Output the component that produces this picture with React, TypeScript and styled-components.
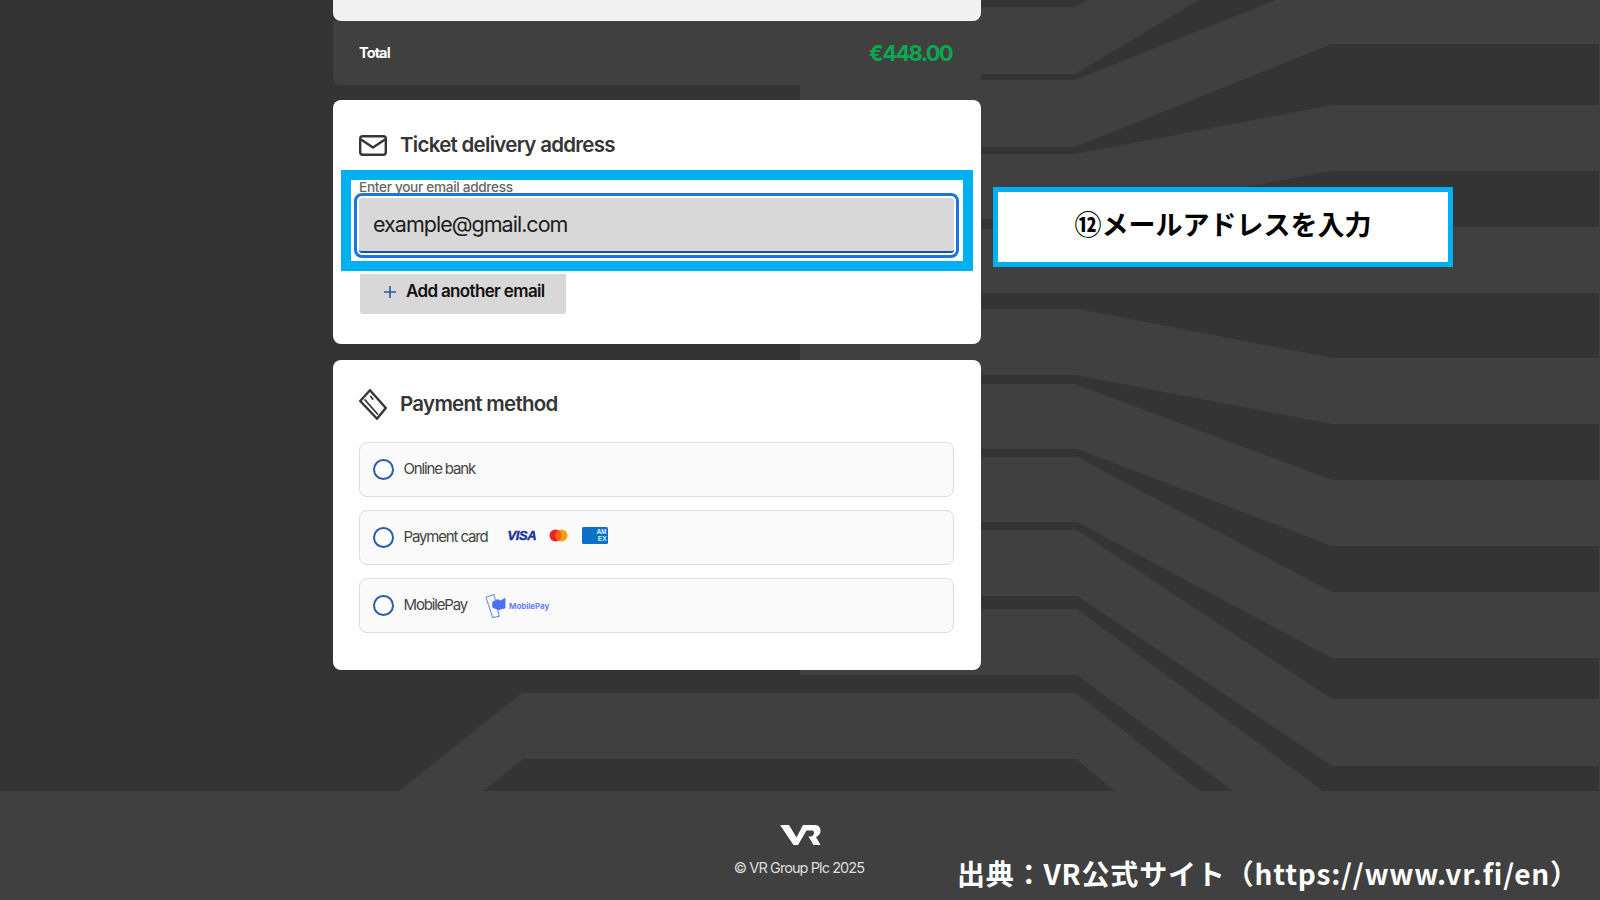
import React from "react";
import styled, { createGlobalStyle } from "styled-components";

const Global = createGlobalStyle`
  html, body { margin: 0; padding: 0; background: #404040; overflow: hidden; }
  body { font-family: Inter, "Liberation Sans", sans-serif; }
  * { box-sizing: border-box; }
`;

const Page = styled.div`
  width: 1600px;
  height: 900px;
  display: flex;
  flex-direction: column;
  position: relative;
  overflow: hidden;
`;
const Main = styled.main`
  position: relative;
  height: 791px;
  flex: none;
  background: #404040;
  overflow: hidden;
`;
const Pattern = styled.svg`
  position: absolute;
  inset: 0;
  width: 1600px;
  height: 791px;
`;
const Column = styled.div`
  position: relative;
  width: 648px;
  margin-left: 333px;
  display: flex;
  flex-direction: column;
`;
const SummaryEnd = styled.div`
  height: 21px;
  background: #f1f1f1;
  border-radius: 0 0 8px 8px;
`;
const TotalBar = styled.div`
  height: 64px;
  background: #404040;
  border-radius: 0 0 8px 8px;
  padding: 0 29px 2px 26px;
  display: flex;
  align-items: center;
  justify-content: space-between;
  margin-bottom: 15px;
`;
const TotalLabel = styled.span`
  color: #fff;
  font-size: 14.5px;
  font-weight: 700;
  letter-spacing: -0.9px;
`;
const TotalValue = styled.span`
  color: #0ca750;
  font-size: 22px;
  font-weight: 700;
  letter-spacing: -1.7px;
  margin-top: 2px;
`;
const Card = styled.section<{ $pt: number; $pb: number }>`
  background: #fff;
  border-radius: 8px;
  padding: ${(p) => p.$pt}px 27px ${(p) => p.$pb}px 26px;
  margin-bottom: 16px;
`;
const Heading = styled.h2`
  margin: 0;
  height: 30px;
  display: flex;
  align-items: center;
  gap: 13px;
  font-size: 20.5px;
  font-weight: 600;
  color: #353535;
  letter-spacing: -0.72px;
`;
const HeadingText = styled.span`
  margin-top: -2px;
`;
const FieldLabel = styled.label`
  display: block;
  margin-top: 18px;
  height: 20px;
  line-height: 18px;
  font-size: 13.6px;
  font-weight: 500;
  color: #666;
  letter-spacing: -0.3px;
`;
const EmailInput = styled.div`
  height: 55px;
  background: #d8d8d8;
  border-bottom: 2px solid #1c4fb5;
  border-radius: 3px;
  outline: 3px solid #1b74e4;
  outline-offset: 2px;
  padding: 0 14px 1px;
  display: flex;
  align-items: center;
  font-size: 21.5px;
  color: #1c1c1c;
  letter-spacing: -0.98px;
`;
const AddButton = styled.div`
  margin-top: 21px;
  margin-left: 1px;
  width: 206px;
  height: 40px;
  background: #d8d8d8;
  border-radius: 0 0 3px 3px;
  display: flex;
  align-items: center;
  gap: 9px;
  padding: 0 0 5px 23px;
  font-size: 17px;
  font-weight: 600;
  color: #111;
  letter-spacing: -0.65px;
`;
const AddLabel = styled.span`
  margin-top: -2px;
`;
const Options = styled.div`
  margin-top: 23px;
  display: flex;
  flex-direction: column;
  gap: 13px;
`;
const Option = styled.div`
  height: 55px;
  background: #fafafa;
  border: 1.5px solid #dddddd;
  border-radius: 8px;
  padding: 0 0 0 13px;
  display: flex;
  align-items: center;
`;
const Radio = styled.span`
  width: 21px;
  height: 21px;
  flex: none;
  border-radius: 50%;
  border: 2px solid #2a5bb0;
  background: #fff;
  margin-right: 9.5px;
`;
const OptionText = styled.span`
  font-size: 15px;
  color: #444;
  letter-spacing: -1.15px;
  margin-top: -2px;
`;
const CardLogos = styled.div`
  margin-left: 20px;
  display: flex;
  align-items: center;
  margin-top: -4px;
`;
const Visa = styled.span`
  font-family: "Liberation Sans", sans-serif;
  font-size: 13px;
  font-weight: 700;
  font-style: italic;
  color: #1a2fa3;
  letter-spacing: -0.4px;
  -webkit-text-stroke: 0.4px #1a2fa3;
  width: 41px;
`;
const Amex = styled.span`
  width: 26px;
  height: 17px;
  margin-left: 14px;
  background: #0a70c8;
  border-radius: 1.5px;
  color: #dcefff;
  font-family: "Liberation Sans", sans-serif;
  font-size: 6.5px;
  font-weight: 700;
  line-height: 7px;
  text-align: right;
  padding: 1px 1px 0 0;
`;
const MobilePayMark = styled.div`
  margin-left: 18px;
  display: flex;
  align-items: center;
  gap: 3px;
  margin-top: 1px;
`;
const MobilePayText = styled.span`
  font-size: 8px;
  font-weight: 700;
  color: #6a80f5;
  letter-spacing: -0.1px;
`;
const HighlightFrame = styled.div`
  position: absolute;
  left: 341px;
  top: 170px;
  width: 632px;
  height: 101px;
  border: 10px solid #00b0f0;
  pointer-events: none;
`;
const Callout = styled.div`
  position: absolute;
  left: 993px;
  top: 187px;
  width: 460px;
  height: 80px;
  background: #fff;
  border: 5px solid #00b0f0;
  padding-bottom: 8px;
  display: flex;
  align-items: center;
  justify-content: center;
  font-family: "Noto Sans CJK JP", sans-serif;
  font-size: 27px;
  font-weight: 700;
  color: #000;
`;
const Footer = styled.footer`
  flex: 1;
  background: #404040;
  display: flex;
  flex-direction: column;
  align-items: center;
  padding-top: 34px;
`;
const Copyright = styled.div`
  margin-top: 12px;
  margin-right: 2px;
  line-height: 22px;
  font-size: 14.5px;
  color: #dedede;
  letter-spacing: -0.92px;
`;
const Credit = styled.div`
  position: absolute;
  left: 957px;
  top: 852px;
  font-family: "Noto Sans CJK JP", sans-serif;
  font-size: 28px;
  line-height: 42px;
  font-weight: 700;
  color: #fff;
  white-space: nowrap;
  letter-spacing: 0.82px;
`;

const D = "#343434";
const bands = [
  "800,0 1087,0 1075,7 800,7",
  "800,74 1075,74 1199,0 1276,0 1075,80 800,80",
  "800,147 1075,147 1332,44 1599,44 1599,105 1332,105 1075,154 800,154",
  "800,219 1075,219 1332,171 1599,171 1599,227 1332,227 1075,229 800,229",
  "800,293 1599,293 1599,358 1332,358 1079,309 800,309",
  "800,375 1075,375 1332,424 1599,424 1599,480 1332,480 1075,384 800,384",
  "800,449 1077,449 1332,546 1599,546 1599,592 1332,592 1077,457 800,457",
  "800,522 1077,522 1332,658 1599,658 1599,699 1332,699 1077,530 800,530",
  "800,596 1077,596 1332,766 1599,766 1599,791 1323,791 1077,609 800,609",
  "800,675 1077,675 1233,791 1200,791 1076,693 800,693",
  "523,759 1076,759 1115,791 483,791",
];

const Envelope = () => (
  <svg width="28" height="21" viewBox="0 0 28 21" fill="none" stroke="#353535" strokeWidth="2.4">
    <rect x="1.2" y="1.2" width="25.6" height="18.6" rx="2.5" />
    <path d="M2 4.5 L14 12.5 L26 4.5" strokeLinejoin="round" />
  </svg>
);
const Tag = () => (
  <svg width="28" height="31" viewBox="0 0 28 31" fill="none" stroke="#353535" strokeWidth="2.4" strokeLinejoin="round" strokeLinecap="round">
    <path d="M11 1.2 L1.2 12 L18 29.8 L26.8 19 Z" />
    <path d="M6 11 L18.5 25" strokeWidth="1.8" />
    <path d="M11.7 7.5 L13.7 10" strokeWidth="1.8" />
  </svg>
);
const Plus = () => (
  <svg width="14" height="14" viewBox="0 0 14 14" stroke="#2a5bb0" strokeWidth="1.6">
    <path d="M7 1 V13 M1 7 H13" />
  </svg>
);
const MasterCard = () => (
  <svg width="19" height="13" viewBox="0 0 19 13">
    <circle cx="6.5" cy="6.5" r="6" fill="#e8202a" />
    <circle cx="12.5" cy="6.5" r="6" fill="#f79e1b" />
    <path d="M9.5 1.3 A6 6 0 0 1 9.5 11.7 A6 6 0 0 1 9.5 1.3" fill="#ff5f00" />
  </svg>
);
const MobilePayIcon = () => (
  <svg width="21" height="24" viewBox="0 0 21 24" fill="none">
    <path d="M1 3.3 L9 0.6 L14.3 22.3 L7.7 23.6 Z" stroke="#6a8cf5" strokeWidth="1.1" strokeLinejoin="round" />
    <path d="M7.7 8 L13 5.5 L15 7 L20 4.5 V14 L13.3 15.7 L7.7 13.3 Z" fill="#4a6ff0" stroke="#4a6ff0" strokeWidth="0.8" strokeLinejoin="round" />
  </svg>
);
const VRLogo = () => (
  <svg width="41" height="20" viewBox="0 0 41 20" fill="#fff">
    <path d="M0 0 H9 L16.5 12.5 L23 0 H35 C39 0 40.5 3 40.5 6 C40.5 9 38.5 11 36 12 L40.5 20 H33.5 L28.5 11.5 H30.5 C33 11.5 34 9 34 7.5 C34 6 33 5.5 31.5 5.5 H26.5 L18 20 H13.5 Z" />
  </svg>
);

export default function App() {
  return (
    <Page>
      <Global />
      <Main>
        <Pattern viewBox="0 0 1600 791">
          <rect x="0" y="0" width="800" height="791" fill={D} />
          <polygon points="522,693 800,693 800,791 399,791" fill="#404040" />
          {bands.map((b) => (
            <polygon key={b} points={b} fill={D} />
          ))}
        </Pattern>
        <Column>
          <SummaryEnd />
          <TotalBar>
            <TotalLabel>Total</TotalLabel>
            <TotalValue>€448.00</TotalValue>
          </TotalBar>
          <Card $pt={30} $pb={30}>
            <Heading>
              <Envelope />
              <HeadingText>Ticket delivery address</HeadingText>
            </Heading>
            <FieldLabel>Enter your email address</FieldLabel>
            <EmailInput>example@gmail.com</EmailInput>
            <AddButton>
              <Plus />
              <AddLabel>Add another email</AddLabel>
            </AddButton>
          </Card>
          <Card $pt={29} $pb={37}>
            <Heading>
              <Tag />
              <HeadingText>Payment method</HeadingText>
            </Heading>
            <Options>
              <Option>
                <Radio />
                <OptionText>Online bank</OptionText>
              </Option>
              <Option>
                <Radio />
                <OptionText>Payment card</OptionText>
                <CardLogos>
                  <Visa>VISA</Visa>
                  <MasterCard />
                  <Amex>AM<br />EX</Amex>
                </CardLogos>
              </Option>
              <Option>
                <Radio />
                <OptionText>MobilePay</OptionText>
                <MobilePayMark>
                  <MobilePayIcon />
                  <MobilePayText>MobilePay</MobilePayText>
                </MobilePayMark>
              </Option>
            </Options>
          </Card>
        </Column>
        <HighlightFrame />
        <Callout>⑫メールアドレスを入力</Callout>
      </Main>
      <Footer>
        <VRLogo />
        <Copyright>© VR Group Plc 2025</Copyright>
      </Footer>
      <Credit>{"出典\uFF1AVR公式サイト\uFF08https://www.vr.fi/en\uFF09"}</Credit>
    </Page>
  );
}
